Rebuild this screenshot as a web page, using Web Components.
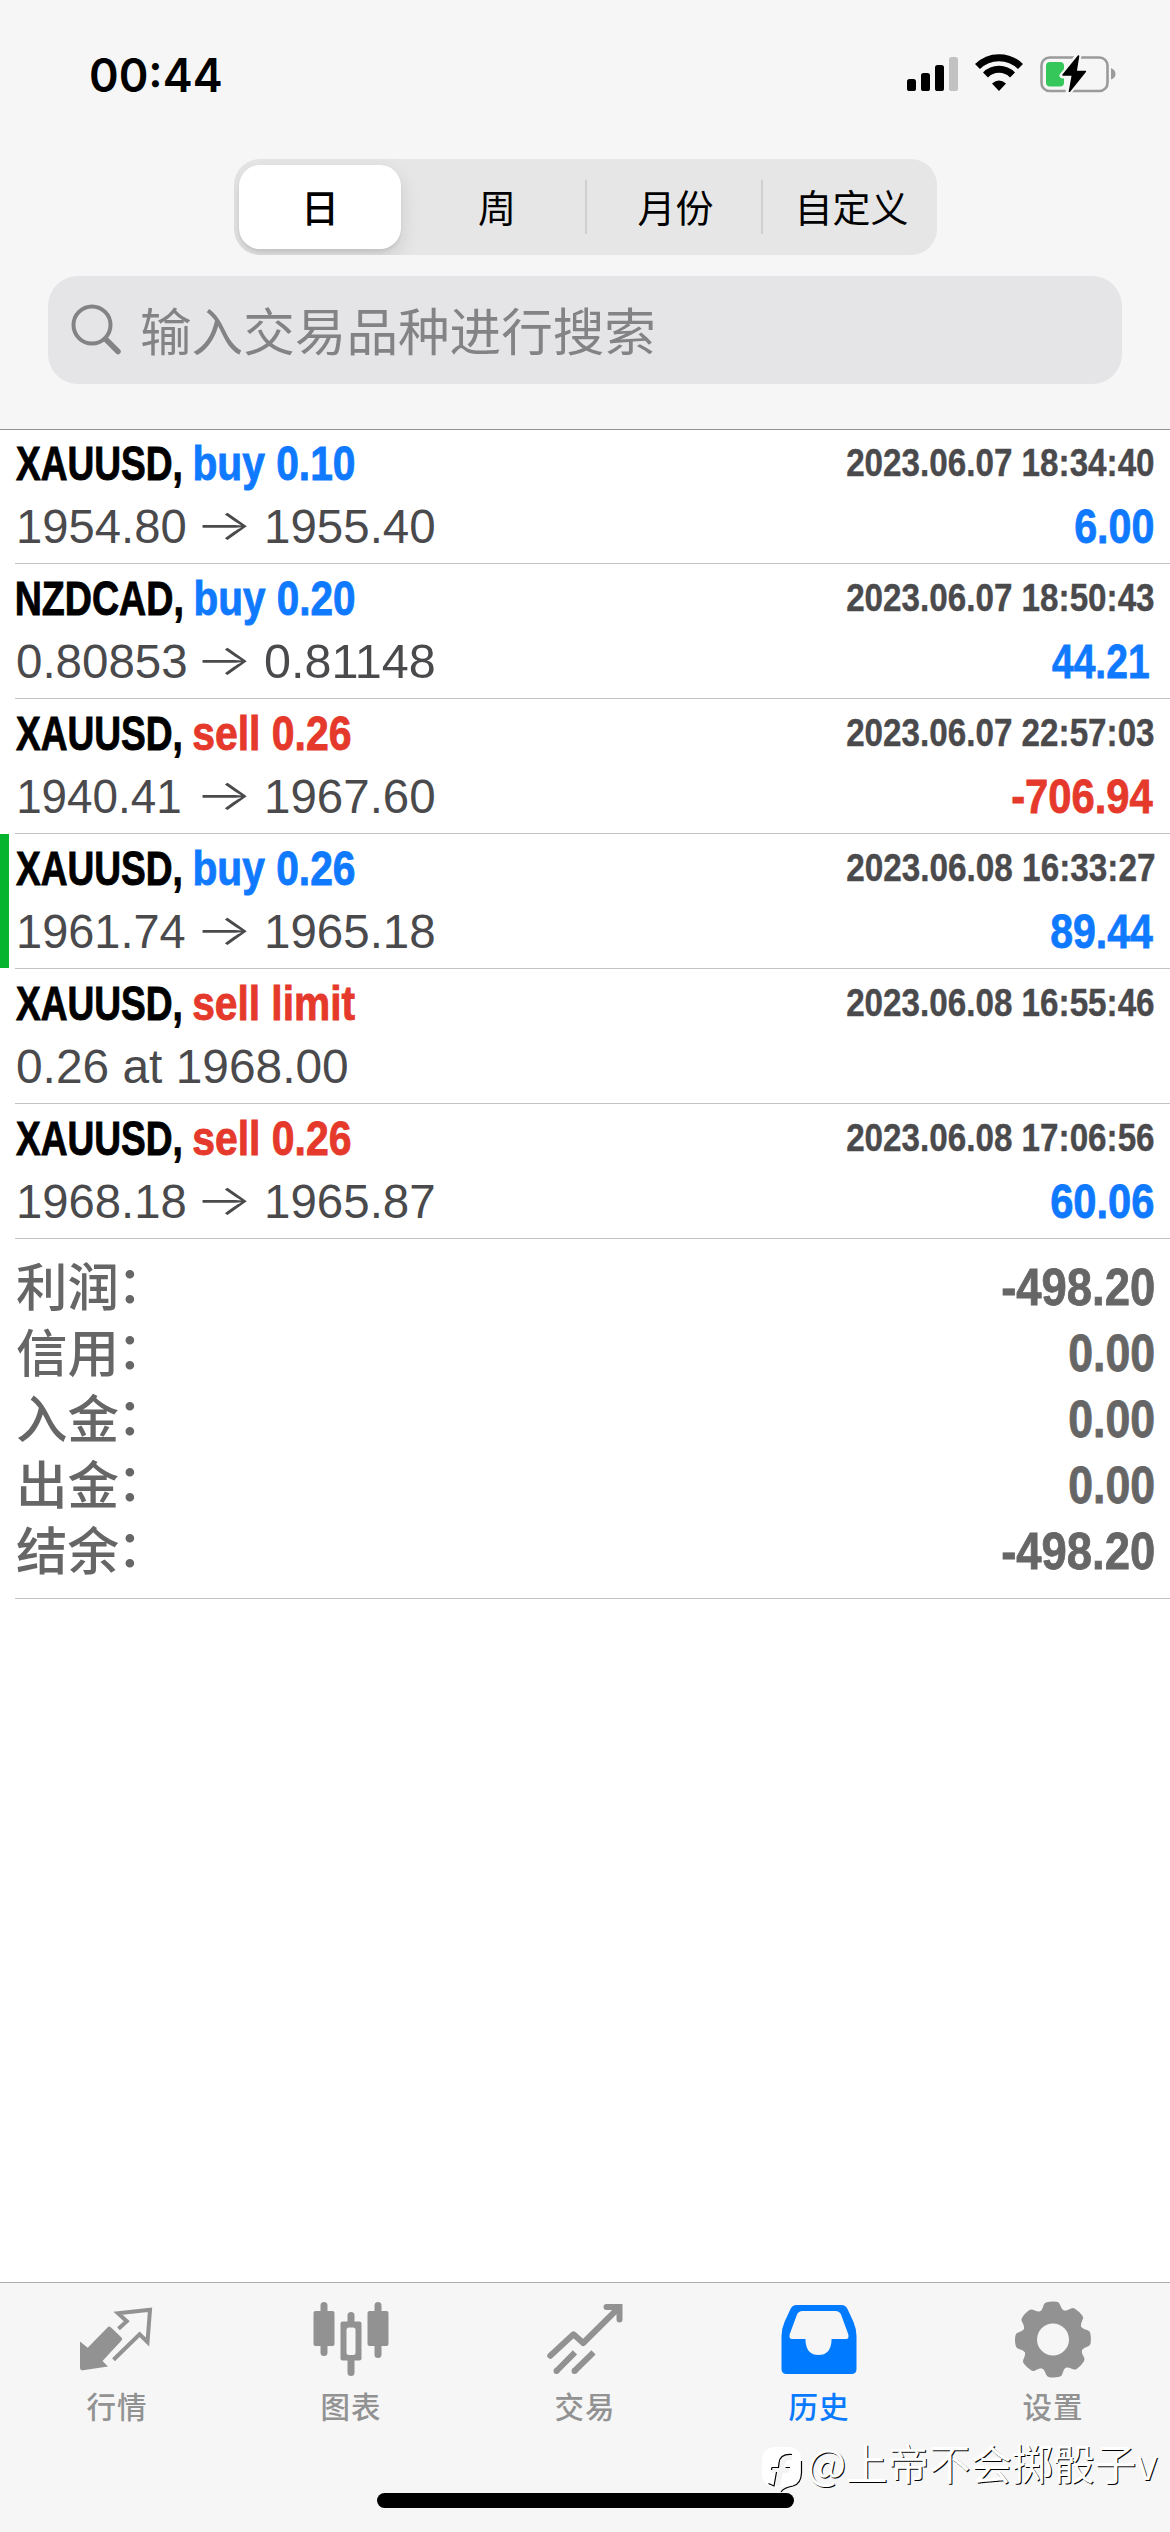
<!DOCTYPE html>
<html lang="zh-CN">
<head>
<meta charset="utf-8">
<title>历史</title>
<style>
html,body{margin:0;padding:0}
body{width:1170px;height:2532px;background:#fff;overflow:hidden;font-family:"Liberation Sans","Noto Sans CJK SC",sans-serif}
</style>
</head>
<body>
<history-screen></history-screen>
<script>
function define(name, html, setup){
  const t=document.createElement('template');
  t.innerHTML=html;
  customElements.define(name, class extends HTMLElement{
    connectedCallback(){
      if(this.shadowRoot) return;
      const r=this.attachShadow({mode:'open'});
      r.appendChild(t.content.cloneNode(true));
      if(setup) setup(this,r);
    }
  });
}

/* Condensed text: squeezes its glyphs so that their ink is w pixels wide */
const ctx=document.createElement('canvas').getContext('2d');
define('fit-text',`<style>
:host{display:inline-block;flex:none;white-space:pre}
span{display:inline-block;transform-origin:0 0}
</style><span></span>`,(el,r)=>{
  const s=r.querySelector('span'), w=+el.getAttribute('w'), text=el.getAttribute('text');
  s.textContent=text;
  el.style.width=w+'px';
  const c=getComputedStyle(el);
  ctx.font=c.fontWeight+' '+c.fontSize+' '+c.fontFamily;
  const m=ctx.measureText(text), l=-m.actualBoundingBoxLeft, k=w/(m.actualBoundingBoxRight-l);
  s.style.transform='translateX('+(-l*k)+'px) scaleX('+k+')';
});

define('status-bar',`<style>
:host{display:flex;justify-content:space-between;align-items:flex-start;height:159px;padding:0 54px 0 91px;box-sizing:border-box}
fit-text{font:600 46px/56px Inter,sans-serif;color:#000;margin-top:47px}
svg{display:block;margin-top:50px}
</style>
<fit-text w="130" text="00:44"></fit-text>
<svg width="210" height="48" viewBox="906 50 210 48">
<rect x="907" y="79" width="9" height="12" rx="2.6"/><rect x="921" y="73" width="9" height="18" rx="2.6"/><rect x="935" y="65" width="9" height="26" rx="2.6"/><rect x="949" y="57" width="9" height="34" rx="2.6" fill="#c2c2c3"/>
<path d="M977.5 66.5A30.500 30.500 0 0 1 1020.500 66.500" fill="none" stroke="#000" stroke-width="7"/>
<path d="M985.500 75A19 19 0 0 1 1012.500 75" fill="none" stroke="#000" stroke-width="7"/>
<path d="M992 83.500Q999 77.500 1006 83.500L999 91Z"/>
<rect x="1041.500" y="57.500" width="66" height="33.500" rx="8" fill="none" stroke="#9b9b9c" stroke-width="2.600"/>
<path d="M1111 68Q1115.500 70 1115.500 74T1111 79.500Z" fill="#9b9b9c"/>
<rect x="1046" y="62" width="18" height="24.500" rx="4" fill="#35c759"/>
<path d="M1078.500 55.500L1062.500 75.500H1072.300L1068.500 92L1085.800 71.300H1075.500Z" fill="#f6f6f6" stroke="#f6f6f6" stroke-width="6" stroke-linejoin="round"/>
<path d="M1078.500 56L1063 75H1072.500L1069.500 91.300L1085.300 71.500H1076Z" stroke="#000" stroke-width="1.600" stroke-linejoin="round"/>
</svg>`);

define('segment-item',`<style>
:host{display:flex;flex:none;width:176px;align-items:center;justify-content:center;height:96px;box-sizing:border-box;font:400 38px/56px "Noto Sans CJK SC",sans-serif;color:#000;padding-bottom:2px}
:host([divided]){padding-left:5px;background:linear-gradient(#cfcfd0,#cfcfd0) 0 21px/2px 54px no-repeat}
:host([selected]){width:162px;height:84px;margin:6px 8px 6px 5px;background:#fff;border-radius:21px;font-weight:500;box-shadow:0 8px 20px rgba(0,0,0,.12),0 3px 3px rgba(0,0,0,.06)}
</style><slot></slot>`);

define('segment-control',`<style>
:host{display:flex;width:703px;height:96px;margin:0 auto 0 234px;border-radius:26px;background:#e6e6e6;overflow:hidden}
</style><slot></slot>`);

define('search-field',`<style>
:host{display:flex;align-items:center;margin:21px 48px 0;height:108px;border-radius:30px;background:#e5e5e7;color:#838385;font:400 51.600px/70px "Noto Sans CJK SC",sans-serif;padding:0 0 3px 22px;box-sizing:border-box}
svg{display:block;margin:3px 18px 0 0}
</style>
<svg width="52" height="52" viewBox="70 305 52 52" fill="none" stroke="#838385"><circle cx="92" cy="326" r="18.500" stroke-width="4"/><path d="M105.500 340L118 352.500" stroke-width="5.500" stroke-linecap="round"/></svg>
<span><slot></slot></span>`);

define('deal-row',`<style>
:host{display:flex;justify-content:space-between;height:135px;box-sizing:border-box;padding:3px 16px 0;background:linear-gradient(#c3c3c5,#c3c3c5) 15px 134px/100% 1px no-repeat;font-size:48px;line-height:63px}
:host([tp]){background:linear-gradient(#c3c3c5,#c3c3c5) 15px 134px/100% 1px no-repeat,linear-gradient(#06b52d,#06b52d) 0 0/9px 134px no-repeat}
.l,.r{display:flex;flex-direction:column}
.r{align-items:flex-end}
.t{display:flex;font-weight:700;-webkit-text-stroke:.9px}
.p{color:#4a4a4d;white-space:pre;display:flex}
.a{font-family:Inter,sans-serif;font-weight:300;font-size:43px;line-height:59px;display:block}
.d{font-size:39px;font-weight:700;color:#4a4a4d;height:63px;margin-top:-1px;margin-bottom:1px;-webkit-text-stroke:.4px}
.v{font-weight:700;-webkit-text-stroke:.8px}
</style><div class="l"><div class="t"></div><div class="p"></div></div><div class="r"></div>`,(el,r)=>{
  const a=n=>el.getAttribute(n), blue='#0f7aff', red='#e5392b';
  const nz=a('sym')[0]=='N', side=a('side');
  r.querySelector('.t').innerHTML='<fit-text w="165" text="'+a('sym')+',"'+(nz?' style="margin-left:1px"':'')+'></fit-text><fit-text style="margin-left:'+(side[0]=='b'?14:12)+'px;color:'+(side[0]=='b'?blue:red)+'" w="'+a('sw')+'" text="'+side+'"></fit-text>';
  const p=r.querySelector('.p');
  if(a('to')){
    const g=a('from')[0]=='1';
    const fw=a('from').endsWith('1')?161:(g?166:169);
    p.innerHTML='<fit-text w="'+fw+'" text="'+a('from')+'" style="margin-left:'+(g?3:1)+'px;margin-right:'+(g?183-fw:16)+'px"></fit-text><fit-text class="a" w="45" text="→"></fit-text><fit-text w="'+(g?167:169)+'" text="'+a('to')+'" style="margin-left:'+(g?20:18)+'px"></fit-text>';
  } else p.innerHTML='<fit-text w="330" text="'+a('from')+'" style="margin-left:1px"></fit-text>';
  r.querySelector('.r').innerHTML='<fit-text class="d" w="307" text="'+a('date')+'"></fit-text>'+(a('val')?'<fit-text class="v" w="'+a('vw')+'" text="'+a('val')+'" style="color:'+(a('val')[0]=='-'?red:blue)+(a('val').endsWith('1')?';margin-right:5px':';margin-right:1px')+'"></fit-text>':'');
});

define('sum-row',`<style>
:host{display:flex;justify-content:space-between;height:66px;line-height:66px;font-size:51px;color:#666;padding:0 16px}
.k{display:flex;font-family:"Liberation Sans","Noto Sans CJK SC",sans-serif;font-weight:500;font-size:51.500px}
.c{margin:-3px 0 3px -2px}
.v{font-weight:700;-webkit-text-stroke:.8px}
</style><span class="k"><span class="n"></span><span class="c">：</span></span>`,(el,r)=>{
  r.querySelector('.n').textContent=el.getAttribute('k');
  const v=document.createElement('fit-text');
  v.className='v';
  v.setAttribute('text',el.getAttribute('v'));
  v.setAttribute('w',el.getAttribute('v')[0]=='-'?151:84);
  r.appendChild(v);
});

define('deal-summary',`<style>
:host{display:block;box-sizing:border-box;height:360px;padding-top:16px;background:linear-gradient(#c3c3c5,#c3c3c5) 15px 359px/100% 1px no-repeat}
</style><slot></slot>`);

define('tab-item',`<style>
:host{display:flex;flex:1;flex-direction:column;align-items:center;color:#929292;font:500 29.500px/44px "Noto Sans CJK SC",sans-serif;letter-spacing:1px}
:host([active]){color:#0a7aff}
::slotted(svg){display:block;margin-top:15px;overflow:visible}
.n{margin-top:5px}
</style><slot name="icon"></slot><span class="n"><slot></slot></span>`);

define('tab-bar',`<style>
:host{display:flex;height:250px;box-sizing:border-box;border-top:1px solid #adadad;background:#f6f6f6}
</style><slot></slot>`);

define('home-indicator',`<style>
:host{position:absolute;left:377px;top:2493px;width:417px;height:15px;border-radius:8px;background:#000}
</style>`);

define('author-mark',`<style>
:host{position:absolute;left:760px;top:2432px;display:flex;align-items:flex-start;color:#fff}
svg{display:block;margin-top:13px}
fit-text{font:400 41.500px/60px "Noto Sans CJK SC",sans-serif;text-shadow:1px 1px 0 #000;margin-left:4px}
</style>
<svg width="45" height="48" viewBox="760 2445 45 48" fill="none">
<path d="M776 2447H788Q801.500 2447 801.500 2461V2473Q801.500 2487 788 2487H776Q762 2487 762 2473V2461Q762 2447 776 2447Z" fill="#fff"/>
<path d="M801.500 2461V2473Q801 2484 793 2486Q784 2487.500 781 2492" stroke="#000" stroke-width="1.200"/>
<path d="M792 2457.500Q783 2456 781.500 2466L777 2486M772 2470H789" stroke="#f3f3f3" stroke-width="5.500"/>
<path d="M792 2454.500Q780 2453.500 779 2463L778.500 2467.500H772L771.500 2470M785.500 2467.500H790M776.500 2472L774 2486L768.500 2483.500" stroke="#000" stroke-width="1.200"/>
</svg>
<fit-text w="349" text="@上帝不会掷骰子v"></fit-text>`);

define('history-screen',`<style>
:host{display:flex;flex-direction:column;position:relative;width:1170px;height:2532px;background:#fff}
header{height:429px;background:#f6f6f6;box-shadow:0 1px 0 #929294;position:relative}
main{flex:1}
</style>
<header>
<status-bar></status-bar>
<segment-control><segment-item selected>日</segment-item><segment-item>周</segment-item><segment-item divided>月份</segment-item><segment-item divided>自定义</segment-item></segment-control>
<search-field>输入交易品种进行搜索</search-field>
</header>
<main>
<deal-row sym="XAUUSD" side="buy 0.10" sw="159" from="1954.80" to="1955.40" date="2023.06.07 18:34:40" val="6.00" vw="78"></deal-row>
<deal-row sym="NZDCAD" side="buy 0.20" sw="158" from="0.80853" to="0.81148" date="2023.06.07 18:50:43" val="44.21" vw="97"></deal-row>
<deal-row sym="XAUUSD" side="sell 0.26" sw="157" from="1940.41" to="1967.60" date="2023.06.07 22:57:03" val="-706.94" vw="141"></deal-row>
<deal-row tp sym="XAUUSD" side="buy 0.26" sw="159" from="1961.74" to="1965.18" date="2023.06.08 16:33:27" val="89.44" vw="102"></deal-row>
<deal-row sym="XAUUSD" side="sell limit" sw="162" from="0.26 at 1968.00" date="2023.06.08 16:55:46"></deal-row>
<deal-row sym="XAUUSD" side="sell 0.26" sw="157" from="1968.18" to="1965.87" date="2023.06.08 17:06:56" val="60.06" vw="102"></deal-row>
<deal-summary>
<sum-row k="利润" v="-498.20"></sum-row><sum-row k="信用" v="0.00"></sum-row><sum-row k="入金" v="0.00"></sum-row><sum-row k="出金" v="0.00"></sum-row><sum-row k="结余" v="-498.20"></sum-row>
</deal-summary>
</main>
<tab-bar>
<tab-item><svg slot="icon" width="76" height="80" viewBox="79 2298 76 80"><path d="M80 2341.500L87.700 2347.700L107.500 2327.500Q109 2325.500 110.800 2327.300L121.500 2337.500Q123 2339 121.500 2340.500L102.500 2361L108 2366.500L83 2370.300Q80 2370.600 80 2367.500Z" fill="#929292"/><path d="M118.500 2328.800L126.800 2321.200L118 2313.200L150 2309.800L147.500 2342L139.600 2334.300L113.500 2359.800" fill="none" stroke="#929292" stroke-width="4"/></svg>行情</tab-item>
<tab-item><svg slot="icon" width="76" height="80" viewBox="312.500 2298 76 80" fill="#929292"><rect x="313" y="2311" width="21" height="35" rx="2"/><rect x="320" y="2302" width="7" height="54" rx="3.500"/><rect x="367" y="2311" width="21" height="35" rx="2"/><rect x="374" y="2302" width="7" height="56" rx="3.500"/><rect x="340" y="2321.500" width="21" height="39" rx="2"/><rect x="347" y="2312" width="7" height="64" rx="3.500"/><rect x="346" y="2327.500" width="9" height="27.500" rx="2.500" fill="#f6f6f6"/></svg>图表</tab-item>
<tab-item><svg slot="icon" width="76" height="80" viewBox="546.500 2298 76 80" fill="none" stroke="#929292" stroke-width="6"><path d="M549.800 2355.700L573 2334.300L582.700 2343L618 2308" stroke-linecap="round" stroke-linejoin="round"/><path d="M606 2307H619V2319.500" stroke-linecap="round"/><path d="M612 2308H619V2316Z" stroke="none" fill="#929292"/><path d="M556 2371L574.500 2352.300M574 2371L593 2352.300"/><path d="M556 2371h.1M574 2371h.1" stroke-linecap="round"/></svg>交易</tab-item>
<tab-item active><svg slot="icon" width="76" height="80" viewBox="780.500 2298 76 80"><path fill="#007aff" fill-rule="evenodd" d="M796 2305H841Q845 2305 847 2309L853 2322Q856 2329 856 2336V2369Q856 2374 851 2374H786Q781 2374 781 2369V2336Q781 2329 784 2322L790 2309Q792 2305 796 2305ZM802 2311Q798 2311 796.500 2314.500L789.300 2334Q788 2339 791.500 2339H805V2341Q806 2355 818 2355Q830 2355 831 2341V2339H845.500Q849 2339 847.700 2334L840.500 2314.500Q839 2311 835 2311Z"/></svg>历史</tab-item>
<tab-item><svg slot="icon" width="76" height="80" viewBox="-38 -41.500 76 80" fill="#929292"><g id="gear" transform="rotate(-2)"></g><circle r="31"/><circle r="16" fill="#f6f6f6"/></svg>设置</tab-item>
</tab-bar>
<home-indicator></home-indicator>
<author-mark></author-mark>`,(el,r)=>{
  const g=r.querySelector('#gear');
  for(let i=0;i<8;i++){
    const p=document.createElementNS('http://www.w3.org/2000/svg','path');
    p.setAttribute('d','M-12.500 -27Q-9 -31 -8 -35Q-7.500 -37 -5 -37.500Q0 -38.500 5 -37.500Q7.500 -37 8 -35Q9 -31 12.500 -27Z');
    p.setAttribute('transform','rotate('+i*45+')');
    g.appendChild(p);
  }
});
</script>
</body>
</html>
